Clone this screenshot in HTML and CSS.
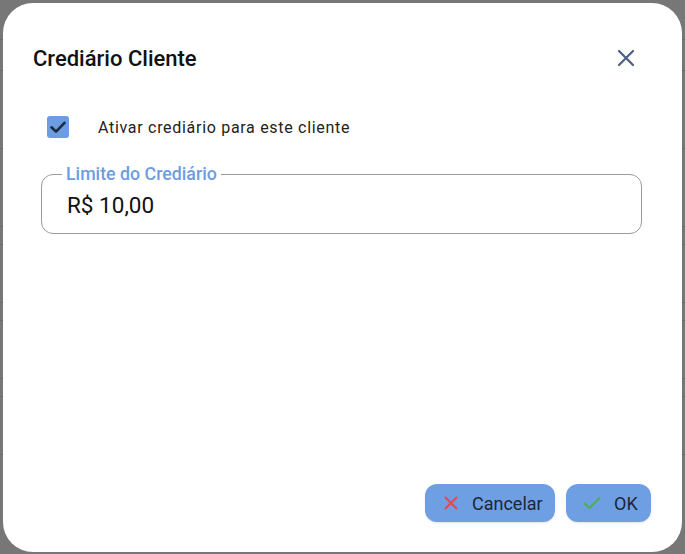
FILE: index.html
```html
<!DOCTYPE html>
<html lang="pt-BR">
<head>
<meta charset="utf-8">
<title>Crediário Cliente</title>
<link rel="stylesheet" href="styles.css">
</head>
<body>
  <div class="page">
    <div class="page-row r1"></div>
    <div class="page-row r2"></div>
    <div class="page-row r3"></div>
    <div class="page-row r4"></div>
    <div class="page-row r5"></div>
    <div class="page-row r6"></div>
    <div class="page-row r5"></div>
    <div class="page-row r6"></div>
    <div class="page-row r5"></div>
    <div class="page-row r6"></div>
  </div>

  <div class="dialog" role="dialog" aria-labelledby="dlg-title">
    <div class="dialog-header">
      <h2 id="dlg-title" class="dialog-title">Crediário Cliente</h2>
      <button class="icon-btn" aria-label="Fechar">
        <svg width="24" height="24" viewBox="0 0 24 24"><path d="M5 5 L19 19 M19 5 L5 19" stroke="#4b607f" stroke-width="2.2" stroke-linecap="round" fill="none"/></svg>
      </button>
    </div>

    <div class="dialog-body">
      <label class="check-row">
        <span class="checkbox">
          <svg width="22" height="22" viewBox="0 0 22 22"><path d="M4.5 11.3 L9 15.6 L17.5 6.8" stroke="#1d2a3e" stroke-width="2.6" stroke-linecap="round" stroke-linejoin="round" fill="none"/></svg>
        </span>
        <span class="check-label">Ativar crediário para este cliente</span>
      </label>

      <fieldset class="field">
        <legend class="field-legend">Limite do Crediário</legend>
        <div class="field-value">R$ 10,00</div>
      </fieldset>
    </div>

    <div class="dialog-actions">
      <button class="btn btn-cancel">
        <svg width="16" height="16" viewBox="0 0 16 16"><path d="M2.5 2.5 L13.5 13.5 M13.5 2.5 L2.5 13.5" stroke="#e5484d" stroke-width="2" stroke-linecap="round" fill="none"/></svg>
        <span>Cancelar</span>
      </button>
      <button class="btn btn-ok">
        <svg width="18" height="16" viewBox="0 0 18 16"><path d="M1.5 8.5 L6.5 13 L16.5 3" stroke="#4caf50" stroke-width="2" stroke-linecap="round" stroke-linejoin="round" fill="none"/></svg>
        <span>OK</span>
      </button>
    </div>
  </div>
</body>
</html>
```

FILE: styles.css
```css
* { box-sizing: border-box; }

html, body {
  margin: 0;
  height: 100%;
}

body {
  background: #777777;
  font-family: Roboto, "Noto Sans", Arial, sans-serif;
  overflow: hidden;
  position: relative;
}

/* dimmed table behind the modal */
.page {
  display: flex;
  flex-direction: column;
}
.page-row { border-bottom: 1px solid #6a6a6a; }
.r1 { height: 40px; }
.r2 { height: 31px; }
.r3 { height: 78px; }
.r4 { height: 78px; }
.r5 { height: 18px; }
.r6 { height: 58px; }

.dialog {
  position: absolute;
  left: 3px;
  top: 3px;
  right: 3px;
  bottom: 2px;
  background: #ffffff;
  border-radius: 30px;
  display: flex;
  flex-direction: column;
  padding: 35px 36px 30px 30px;
}

.dialog-header {
  display: flex;
  align-items: center;
  justify-content: space-between;
  height: 40px;
}

.dialog-title {
  margin: 0;
  font-size: 22px;
  font-weight: 500;
  color: #111111;
}

.icon-btn {
  width: 40px;
  height: 40px;
  border: none;
  background: transparent;
  padding: 0;
  display: flex;
  align-items: center;
  justify-content: center;
}

.dialog-body {
  flex: 1;
  display: flex;
  flex-direction: column;
  padding-left: 8px;
  padding-right: 4px;
}

.check-row {
  display: flex;
  align-items: center;
  margin-top: 38px;
  margin-left: 6px;
  gap: 29px;
}

.checkbox {
  width: 22px;
  height: 22px;
  border-radius: 3px;
  background: #6c9de0;
  display: flex;
  align-items: center;
  justify-content: center;
}

.check-label {
  font-size: 16px;
  color: #222222;
  letter-spacing: 0.7px;
}

.field {
  margin: 25px 0 0 0;
  padding: 0 24px 0 24px;
  border: 1px solid #9a9a9a;
  border-radius: 12px;
  height: 71px;
}

.field-legend {
  padding: 0 4px;
  margin-left: -4px;
  font-size: 17.8px;
  font-weight: 500;
  color: #6c9de0;
  line-height: 22px;
}

.field-value {
  font-size: 22.5px;
  line-height: 26px;
  color: #111111;
  margin-top: 7px;
  margin-left: 1px;
}

.dialog-actions {
  display: flex;
  justify-content: flex-end;
  gap: 11px;
  margin-right: -5px;
}

.btn {
  height: 38px;
  border: none;
  border-radius: 12px;
  background: #6f9fe3;
  color: #1b2638;
  font-family: inherit;
  font-size: 18px;
  font-weight: 400;
  display: flex;
  align-items: center;
  box-shadow: 0 1px 2px rgba(0, 0, 0, 0.12);
}

.btn-cancel {
  width: 130px;
  padding-left: 18px;
  gap: 13px;
}

.btn-ok {
  width: 85px;
  padding-left: 17px;
  gap: 13px;
}
```
